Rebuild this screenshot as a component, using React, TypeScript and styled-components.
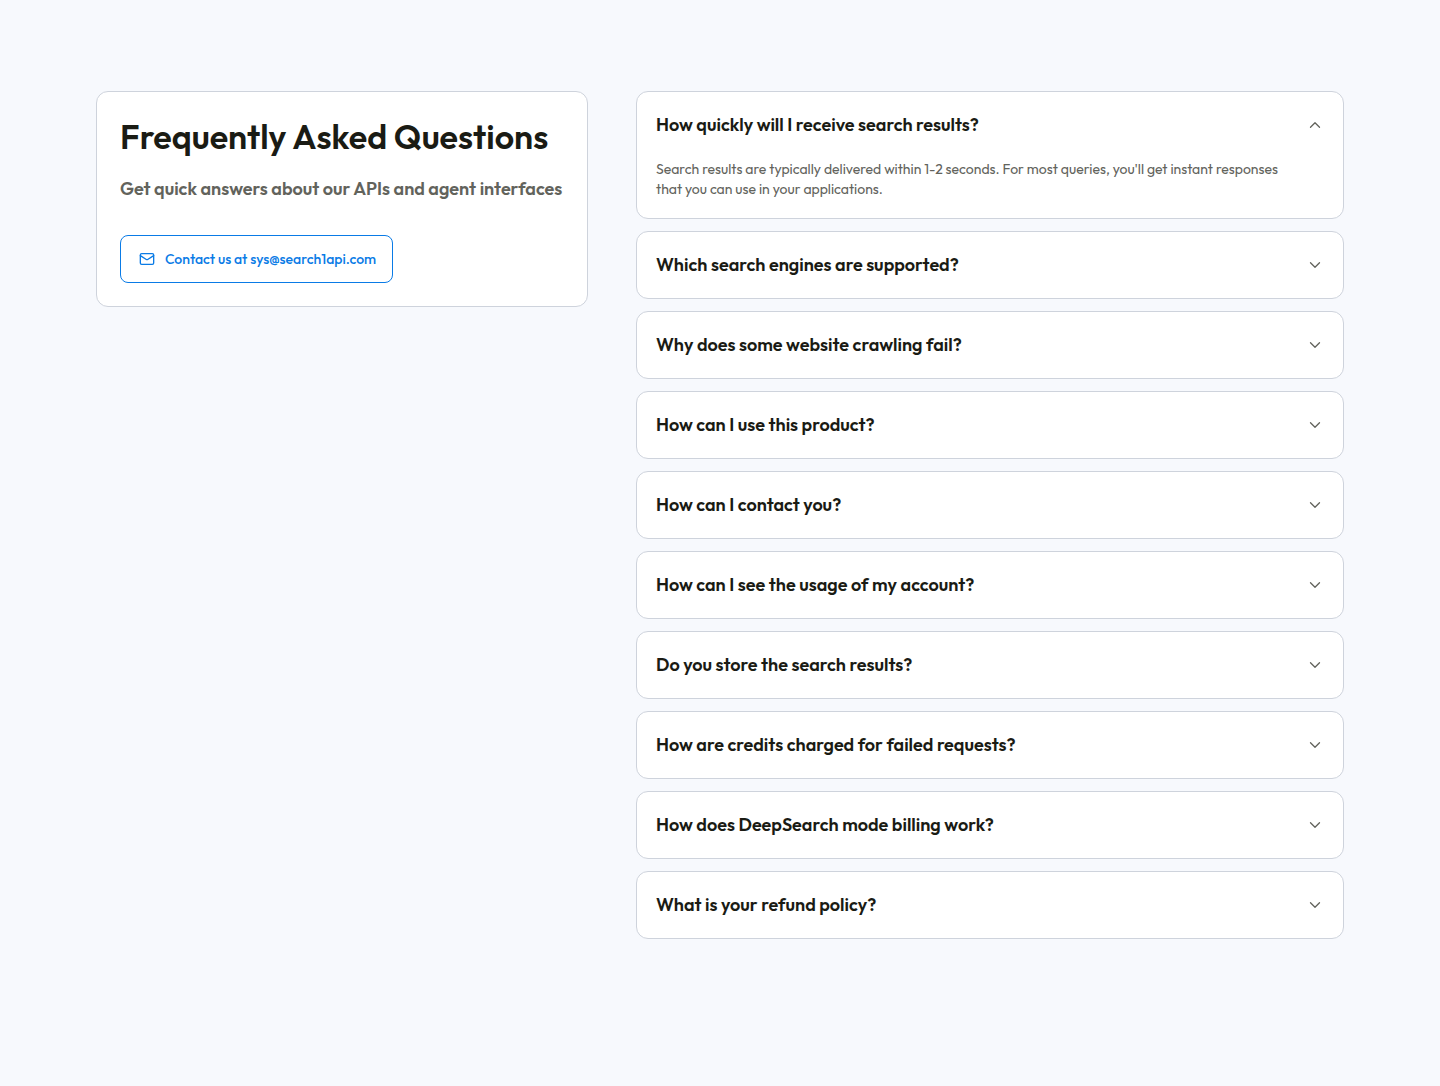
import React, { useState } from "react";
import styled, { createGlobalStyle } from "styled-components";
import { ChevronDown, ChevronUp, Mail } from "lucide-react";

const GlobalStyle = createGlobalStyle`
  *, *::before, *::after { box-sizing: border-box; }
  body {
    margin: 0;
    background: #f7f9fd;
    color: #1a1b14;
    font-family: Outfit, Lato, "Open Sans", sans-serif;
  }
`;

const Section = styled.section`
  display: grid;
  grid-template-columns: repeat(12, minmax(0, 1fr));
  gap: 48px;
  align-items: start;
  max-width: 1440px;
  margin: 0 auto;
  padding: 91px 96px;

  @media (max-width: 1000px) {
    display: flex;
    flex-direction: column;
    align-items: stretch;
    padding: 48px 24px;
  }
`;

const Card = styled.div`
  background: #fff;
  border: 1px solid #ced3dc;
  border-radius: 12px;
`;

const Intro = styled(Card)`
  grid-column: span 5;
  padding: 23px;
`;

const Title = styled.h2`
  margin: 0 0 16px;
  font-size: 34px;
  line-height: 44px;
  font-weight: 600;
`;

const Subtitle = styled.p`
  margin: 0 0 32px;
  font-size: 18px;
  line-height: 28px;
  font-weight: 600;
  color: #62635c;
`;

const ContactLink = styled.a`
  display: inline-flex;
  align-items: center;
  gap: 10px;
  height: 48px;
  padding: 0 16px 0 18px;
  border: 1px solid #0a7be6;
  border-radius: 8px;
  color: #0a7be6;
  font-size: 14px;
  line-height: 20px;
  font-weight: 500;
  text-decoration: none;
  vertical-align: top;
`;

const List = styled.div`
  grid-column: span 7;
  display: flex;
  flex-direction: column;
  gap: 12px;
`;

const Heading = styled.h3`
  margin: 0;
`;

const Question = styled.button`
  display: flex;
  align-items: center;
  justify-content: space-between;
  gap: 16px;
  width: 100%;
  padding: 20px 19px;
  border: 0;
  background: none;
  color: inherit;
  font-family: inherit;
  font-size: 18px;
  line-height: 26px;
  font-weight: 600;
  text-align: left;
  cursor: pointer;

  svg {
    flex: none;
    color: #62635c;
  }
`;

const Answer = styled.p`
  margin: 0;
  padding: 1px 64px 19px 19px;
  font-size: 14px;
  line-height: 20px;
  font-weight: 400;
  color: #62635c;
`;

const faqs = [
  {
    question: "How quickly will I receive search results?",
    answer:
      "Search results are typically delivered within 1-2 seconds. For most queries, you'll get instant responses that you can use in your applications.",
  },
  { question: "Which search engines are supported?" },
  { question: "Why does some website crawling fail?" },
  { question: "How can I use this product?" },
  { question: "How can I contact you?" },
  { question: "How can I see the usage of my account?" },
  { question: "Do you store the search results?" },
  { question: "How are credits charged for failed requests?" },
  { question: "How does DeepSearch mode billing work?" },
  { question: "What is your refund policy?" },
];

export default function App() {
  const [open, setOpen] = useState(0);

  return (
    <>
      <GlobalStyle />
      <Section>
        <Intro>
          <Title>Frequently Asked Questions</Title>
          <Subtitle>Get quick answers about our APIs and agent interfaces</Subtitle>
          <ContactLink href="mailto:sys@search1api.com">
            <Mail size={16} aria-hidden />
            Contact us at sys@search1api.com
          </ContactLink>
        </Intro>
        <List>
          {faqs.map(({ question, answer }, i) => {
            const expanded = open === i;
            const Chevron = expanded ? ChevronUp : ChevronDown;
            return (
              <Card key={question}>
                <Heading>
                  <Question
                    type="button"
                    aria-expanded={expanded}
                    onClick={() => setOpen(expanded ? -1 : i)}
                  >
                    {question}
                    <Chevron size={18} strokeWidth={1.75} aria-hidden />
                  </Question>
                </Heading>
                {expanded && answer && <Answer>{answer}</Answer>}
              </Card>
            );
          })}
        </List>
      </Section>
    </>
  );
}
